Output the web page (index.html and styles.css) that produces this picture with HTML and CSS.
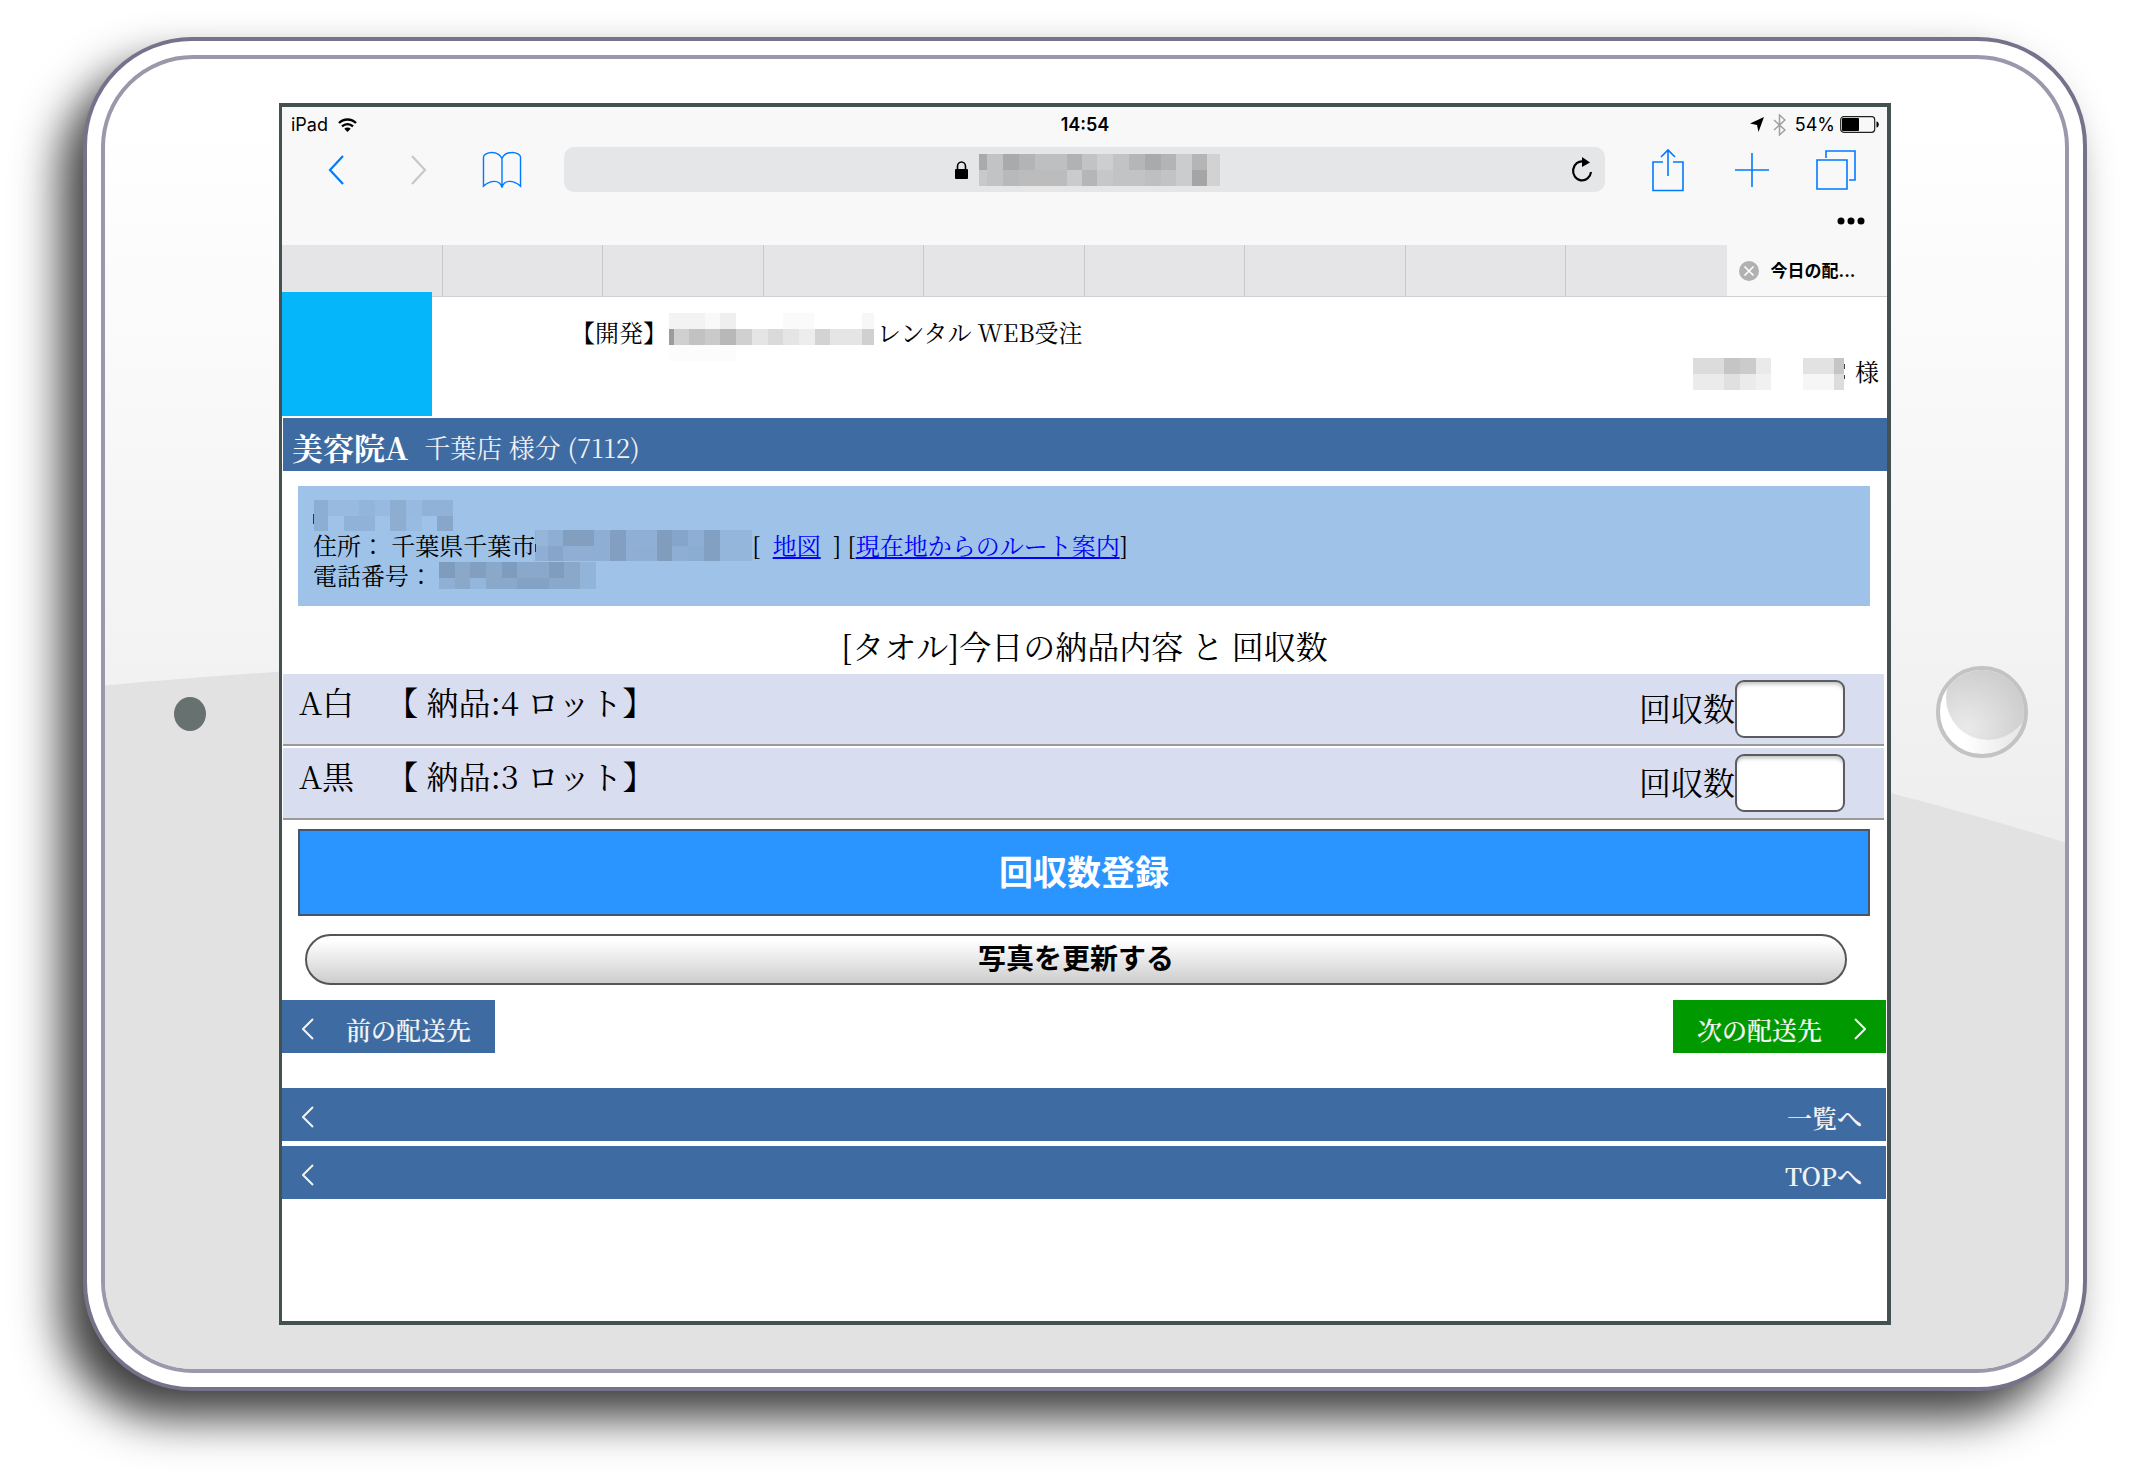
FILE: index.html
```html
<!DOCTYPE html>
<html lang="ja">
<head>
<meta charset="utf-8">
<title>今日の配送</title>
<link rel="stylesheet" href="styles.css">
</head>
<body>
<div class="device">
  <div class="bezel">
    <svg class="bezel-shade" viewBox="0 0 1960 1309" preserveAspectRatio="none" aria-hidden="true"><path d="M0 626C600 570 1350 590 1960 783V1309H0Z" fill="#e2e2e2"/></svg>
    <div class="side"><span class="camera"></span></div>
    <div class="screen">
      <div class="status">
        <div class="status-left">
          <span>iPad</span>
          <svg width="19" height="14" viewBox="0 0 19 14" aria-hidden="true"><g fill="none" stroke="#000" stroke-width="2.400"><path d="M1 5a12 12 0 0 1 17 0"/><path d="M4 8.300a8 8 0 0 1 11 0"/></g><path d="M6.300 10.800a4.600 4.600 0 0 1 6.400 0L9.500 14Z"/></svg>
        </div>
        <strong class="clock">14:54</strong>
        <div class="status-right">
          <svg width="14" height="15" viewBox="0 0 14 15" aria-hidden="true"><path d="M14 0L8.500 15 7 8 0 6.500Z"/></svg>
          <svg width="13" height="22" viewBox="0 0 13 22" aria-hidden="true"><path d="M1 6l11 10-5.500 5V1L12 6 1 16" fill="none" stroke="#a0a0a0" stroke-width="1.500"/></svg>
          <span>54%</span>
          <svg class="battery" width="39" height="17" viewBox="0 0 39 17" aria-hidden="true"><rect x=".7" y=".7" width="34" height="15.600" rx="3" fill="none" stroke="#222" stroke-width="1.200"/><rect x="2" y="2" width="17" height="13" rx="1"/><path d="M36.500 5.500c3 0 3 6 0 6Z"/></svg>
        </div>
      </div>
      <div class="toolbar">
        <div class="nav">
          <button class="tool" type="button" aria-label="戻る"><svg width="16" height="30" viewBox="0 0 16 30"><path d="M15 1L2 15 15 29" fill="none" stroke="#007aff" stroke-width="2.200"/></svg></button>
          <button class="tool" type="button" aria-label="進む"><svg width="16" height="30" viewBox="0 0 16 30"><path d="M1 1L14 15 1 29" fill="none" stroke="#c7c7c7" stroke-width="2.200"/></svg></button>
          <button class="tool" type="button" aria-label="ブックマーク"><svg width="40" height="38" viewBox="0 0 42 40"><path d="M21 8C19 3 14 1.500 10 1.500 6 1.500 1.500 4 1.500 6.500V37C6 33 9 32 13 32 17 32 20 34 21 38.500 22 34 25 32 29 32 33 32 36 33 40.500 37V6.500C40.500 4 36 1.500 32 1.500 28 1.500 23 3 21 8ZV38" fill="none" stroke="#007aff" stroke-width="1.500"/></svg></button>
        </div>
        <div class="address">
          <span></span>
          <div class="address-text">
            <svg width="13" height="18" viewBox="0 0 13 18" aria-hidden="true"><path d="M2.500 9V5.500a4 4.500 0 0 1 8 0V9" fill="none" stroke="#000" stroke-width="1.600"/><rect y="8" width="13" height="10" rx="1"/></svg>
            <svg width="241" height="32" viewBox="0 0 241 32" aria-hidden="true" shape-rendering="crispEdges"><rect width="241" height="32" fill="#c2c3c4"/><rect width="8" height="16" fill="#aaaaaa"/><rect x="24" width="16" height="16" fill="#a9aaac"/><rect x="40" width="16" height="16" fill="#b3b4b6"/><rect x="56" width="32" height="16" fill="#bebfc1"/><rect x="88" width="15" height="16" fill="#b1b2b4"/><rect x="118" width="16" height="16" fill="#cdced0"/><rect x="150" width="16" height="16" fill="#b5b6b8"/><rect x="166" width="16" height="16" fill="#a9aaac"/><rect x="182" width="16" height="16" fill="#b3b4b6"/><rect x="197" width="16" height="32" fill="#cbccce"/><rect x="213" width="15" height="16" fill="#b4b5b7"/><rect x="228" width="13" height="32" fill="#d2d2d3"/><rect y="16" width="8" height="16" fill="#c8c9cb"/><rect x="24" y="16" width="16" height="16" fill="#b8b9bb"/><rect x="40" y="16" width="48" height="16" fill="#bcbcbd"/><rect x="88" y="16" width="15" height="16" fill="#cacbcd"/><rect x="103" y="16" width="15" height="16" fill="#b6b6b6"/><rect x="118" y="16" width="16" height="16" fill="#c6c7c9"/><rect x="166" y="16" width="16" height="16" fill="#c0bfbf"/><rect x="213" y="16" width="15" height="16" fill="#a4a5a4"/></svg>
          </div>
          <button class="reload" type="button" aria-label="再読み込み"><svg width="22" height="25" viewBox="0 0 22 25"><path d="M12.500 4.500A9 9.500 0 1 0 20 15" fill="none" stroke="#000" stroke-width="2.200"/><path d="M11 0L19 5.500 11 10Z"/></svg></button>
        </div>
        <div class="actions">
          <button class="tool tool-wide" type="button" aria-label="共有"><svg width="32" height="44" viewBox="0 0 32 44"><path d="M11 14H1V42.500H31V14H21M16 28V2M9 9L16 2 23 9" fill="none" stroke="#007aff" stroke-width="1.600"/></svg></button>
          <button class="tool tool-wide" type="button" aria-label="新規タブ"><svg width="34" height="34" viewBox="0 0 34 34"><path d="M17 0V34M0 17H34" fill="none" stroke="#007aff" stroke-width="1.600"/></svg></button>
          <button class="tool tool-wide" type="button" aria-label="タブ一覧"><svg width="40" height="40" viewBox="0 0 40 40"><path d="M1 10H31V39H1ZM10 8V1H39V30H33" fill="none" stroke="#007aff" stroke-width="1.600"/></svg></button>
        </div>
      </div>
      <div class="more">
        <button class="more-button" type="button" aria-label="その他"><svg width="28" height="8" viewBox="0 0 28 8"><circle cx="4" cy="4" r="3.500"/><circle cx="14" cy="4" r="3.500"/><circle cx="24" cy="4" r="3.500"/></svg></button>
      </div>
      <div class="tabs">
        <span class="tab"></span><span class="tab"></span><span class="tab"></span><span class="tab"></span><span class="tab"></span><span class="tab"></span><span class="tab"></span><span class="tab"></span><span class="tab tab-last"></span>
        <div class="tab-active">
          <button class="tab-close" type="button" aria-label="タブを閉じる"><svg width="20" height="20" viewBox="0 0 20 20"><circle cx="10" cy="10" r="10" fill="#b1b1b1"/><path d="M5.500 5.500L14.500 14.500M14.500 5.500L5.500 14.500" stroke="#fff" stroke-width="1.600"/></svg></button>
          <span>今日の配...</span>
        </div>
      </div>

      <main class="page">
        <header class="header">
          <div class="logo"></div>
          <p class="site">【開発】<svg class="site-mask" width="206" height="48" viewBox="0 0 206 48" aria-hidden="true" shape-rendering="crispEdges"><rect width="67" height="16" fill="#f3f3f3"/><rect x="36" width="15" height="16" fill="#f9f9f9"/><rect x="51" width="16" height="16" fill="#efefef"/><rect x="114" width="31" height="16" fill="#fafafa"/><rect x="193" width="12" height="16" fill="#f7f7f7"/><rect y="32" width="67" height="16" fill="#fcfcfc"/><rect y="16" width="205" height="16" fill="#e5e5e5"/><rect y="16" width="5" height="16" fill="#9c9c9c"/><rect x="5" y="16" width="15" height="16" fill="#d0d0d0"/><rect x="20" y="16" width="16" height="16" fill="#c2c2c2"/><rect x="36" y="16" width="15" height="16" fill="#cacaca"/><rect x="51" y="16" width="16" height="16" fill="#b8b8b8"/><rect x="67" y="16" width="16" height="16" fill="#d0d0d0"/><rect x="99" y="16" width="15" height="16" fill="#dadada"/><rect x="130" y="16" width="16" height="16" fill="#ededed"/><rect x="146" y="16" width="15" height="16" fill="#d3d3d3"/><rect x="193" y="16" width="12" height="16" fill="#d0d0d0"/></svg>レンタル WEB受注</p>
          <p class="user"><svg width="154" height="32" viewBox="0 0 154 32" aria-hidden="true" shape-rendering="crispEdges"><rect width="78" height="16" fill="#dcdcdc"/><rect x="31" width="16" height="16" fill="#c5c5c5"/><rect x="47" width="16" height="16" fill="#cbcbcb"/><rect x="63" width="15" height="16" fill="#eaeaea"/><rect y="16" width="78" height="16" fill="#ebebeb"/><rect x="31" y="16" width="16" height="16" fill="#e0e0e0"/><rect x="63" y="16" width="15" height="16" fill="#f1f1f1"/><rect x="110" width="31" height="16" fill="#e2e2e2"/><rect x="141" width="10" height="16" fill="#c5c5c5"/><rect x="110" y="16" width="31" height="16" fill="#f6f6f6"/><rect x="141" y="16" width="10" height="16" fill="#dcdcdc"/><path d="M151 6h1v5h-1ZM151 17h1v4h-1Z" fill="#444"/></svg><span>様</span></p>
        </header>

        <h1 class="shop"><strong class="shop-name">美容院A</strong><span>千葉店 様分 (7112)</span></h1>

        <section class="info">
          <p class="line"><svg width="141" height="31" viewBox="0 0 141 31" aria-hidden="true" shape-rendering="crispEdges"><path d="M0 14h1v10H0Z" fill="#334"/><rect x="1" width="139" height="16" fill="#98bae0"/><rect x="1" width="14" height="31" fill="#8caed3"/><rect x="46" width="16" height="16" fill="#92b5db"/><rect x="77" width="16" height="31" fill="#8dadd1"/><rect x="109" width="31" height="16" fill="#91b2d8"/><rect x="31" y="16" width="31" height="15" fill="#91b2d8"/><rect x="93" y="16" width="16" height="15" fill="#98bbe1"/><rect x="124" y="16" width="16" height="15" fill="#87a6ca"/></svg></p>
          <p class="line">住所： 千葉県千葉市<svg width="217" height="31" viewBox="0 0 217 31" aria-hidden="true" shape-rendering="crispEdges"><rect width="217" height="31" fill="#8eafd3"/><path d="M0 14h1v8H0Z" fill="#234"/><rect x="1" width="12" height="16" fill="#95b5d9"/><rect x="28" width="31" height="16" fill="#829fbf"/><rect x="75" width="16" height="31" fill="#829fc1"/><rect x="91" width="31" height="16" fill="#8fb0d4"/><rect x="122" width="15" height="31" fill="#809dbd"/><rect x="137" width="16" height="16" fill="#86a6c9"/><rect x="169" width="16" height="31" fill="#82a0c2"/><rect x="185" width="32" height="31" fill="#95b6db"/><rect x="13" y="16" width="15" height="15" fill="#86a5c8"/><rect x="153" y="16" width="16" height="15" fill="#8badd1"/></svg>[&nbsp; <a href="#map">地図</a> &nbsp;] [<a href="#route">現在地からのルート案内</a>]</p>
          <p class="line">電話番号： <svg width="157" height="27" viewBox="0 0 157 27" aria-hidden="true" shape-rendering="crispEdges"><rect width="157" height="27" fill="#89a8ca"/><rect width="16" height="16" fill="#7f9cbc"/><rect x="31" width="16" height="16" fill="#829fc0"/><rect x="63" width="15" height="16" fill="#7e9cbd"/><rect x="110" width="15" height="16" fill="#7f9dbe"/><rect x="141" width="16" height="27" fill="#93b4d9"/><rect y="16" width="16" height="11" fill="#8fb0d4"/><rect x="31" y="16" width="16" height="11" fill="#94b6dc"/><rect x="78" y="16" width="32" height="11" fill="#83a2c4"/></svg></p>
        </section>

        <form class="collect">
          <h2 class="title">[タオル]今日の納品内容 と 回収数</h2>
          <div class="item">
            <span class="item-name">A白  　【 納品:4 ロット】</span>
            <div class="item-count"><label class="item-label" for="white">回収数</label><input class="count" id="white" type="text"></div>
          </div>
          <div class="item">
            <span class="item-name">A黒  　【 納品:3 ロット】</span>
            <div class="item-count"><label class="item-label" for="black">回収数</label><input class="count" id="black" type="text"></div>
          </div>
          <button class="register" type="button">回収数登録</button>
          <button class="photo" type="button">写真を更新する</button>
        </form>

        <nav class="steps">
          <a class="step" href="#prev"><svg width="12" height="22" viewBox="0 0 12 22" aria-hidden="true"><path d="M11 1L1 11 11 21"/></svg><span>前の配送先</span></a>
          <a class="step step-next" href="#next"><span>次の配送先</span><svg width="12" height="22" viewBox="0 0 12 22" aria-hidden="true"><path d="M1 1L11 11 1 21"/></svg></a>
        </nav>
        <nav class="links">
          <a class="link" href="#list"><svg width="12" height="22" viewBox="0 0 12 22" aria-hidden="true"><path d="M11 1L1 11 11 21"/></svg><span>一覧へ</span></a>
          <a class="link" href="#top"><svg width="12" height="22" viewBox="0 0 12 22" aria-hidden="true"><path d="M11 1L1 11 11 21"/></svg><span>TOPへ</span></a>
        </nav>
      </main>
    </div>
    <div class="side side-right">
      <svg width="92" height="92" viewBox="0 0 92 92" aria-hidden="true">
        <defs>
          <linearGradient id="rim" x1="0" y1="0" x2="1" y2="0"><stop offset=".3" stop-color="#fff"/><stop offset="1" stop-color="#e4e4e4"/></linearGradient>
          <radialGradient id="dome" cx=".25" cy=".85" r=".85"><stop offset="0" stop-color="#eaeaea"/><stop offset="1" stop-color="#c9c9c9"/></radialGradient>
          <clipPath id="disc"><circle cx="46" cy="46" r="42"/></clipPath>
        </defs>
        <circle cx="46" cy="46" r="44" fill="url(#rim)" stroke="#c3c3c3" stroke-width="4"/>
        <ellipse cx="52" cy="32" rx="42" ry="42" fill="url(#dome)" clip-path="url(#disc)"/>
      </svg>
    </div>
  </div>
</div>
</body>
</html>
```
FILE: styles.css
```css
* { box-sizing: border-box; }
body {
  margin: 0;
  min-height: 100vh;
  padding: 37px 42px 90px 83px;
  display: flex;
  background: #fff;
  color: #000;
  font-family: "Noto Serif CJK JP", "Liberation Serif", "Noto Sans CJK JP", serif;
}
p, h1, h2 { margin: 0; font-weight: 400; }
button { margin: 0; padding: 0; border: 0; background: none; color: inherit; }
svg { display: block; flex: none; }

/* Tablet body */
.device {
  flex: 1;
  display: flex;
  padding: 14px;
  border: 4px solid #75738b;
  border-radius: 109px;
  background: #fff;
  box-shadow: -22px 27px 46px rgba(0, 0, 0, .76);
}
.bezel {
  flex: 1;
  position: relative;
  display: flex;
  padding: 44px 0;
  border: 4px solid #9a98aa;
  border-radius: 92px;
  background: linear-gradient(#fff 5%, #eee 60%);
  overflow: hidden;
}
.bezel-shade { position: absolute; inset: 0; width: 100%; height: 100%; }
.side {
  position: relative;
  flex: 0 0 174px;
  display: flex;
  align-items: center;
  justify-content: center;
  padding: 0 4px 0 0;
}
.side-right { padding: 0 0 4px 8px; }
.camera { width: 32px; height: 34px; border-radius: 50%; background: #667170; }
.screen {
  position: relative;
  flex: 1;
  min-width: 0;
  display: flex;
  flex-direction: column;
  border: solid #435251;
  border-width: 4px 4px 4px 3px;
  background: #f8f8f8;
  font-size: 24px;
  line-height: 30px;
}

/* Browser chrome */
.status {
  display: grid;
  grid-template-columns: 1fr auto 1fr;
  align-items: center;
  height: 33px;
  padding: 2px 8px 0 9px;
  font: 18px Inter, sans-serif;
}
.status-left, .status-right { display: flex; align-items: center; gap: 10px; }
.status-right { justify-content: flex-end; gap: 9px; }
.battery { margin-left: -4px; }
.clock { font-weight: 600; }
.toolbar {
  display: flex;
  align-items: center;
  height: 59px;
  padding: 0 9px 0 12px;
}
.nav, .actions { display: flex; }
.tool { width: 83px; height: 48px; display: flex; align-items: center; justify-content: center; }
.tool-wide { width: 84px; }
.address {
  flex: 1;
  display: grid;
  grid-template-columns: 1fr auto 1fr;
  align-items: center;
  height: 45px;
  margin: 0 21px;
  padding: 0 12px;
  border-radius: 10px;
  background: #e5e6e8;
}
.address-text { display: flex; align-items: center; gap: 11px; padding-left: 6px; }
.reload { justify-self: end; }
.more { display: flex; justify-content: flex-end; height: 46px; padding: 0 22px; }
.more-button { height: 44px; }
.tabs {
  display: grid;
  grid-template-columns: repeat(10, 1fr);
  height: 52px;
  border-bottom: 1px solid #cfcfd1;
}
.tab { border-right: 1px solid #c9c9cb; background: #e5e5e7; }
.tab-last { border-right: 0; }
.tab-active {
  display: flex;
  align-items: center;
  gap: 12px;
  padding-left: 12px;
  font: 700 17px/24px Inter, "Noto Sans CJK JP", sans-serif;
  white-space: nowrap;
}
.tab-close { display: flex; }

/* Web page */
.page { flex: 1; background: #fff; }
.header {
  display: grid;
  grid-template-columns: 150px 1fr auto;
  height: 121px;
  padding-right: 8px;
}
.logo { height: 124px; margin-top: -5px; position: relative; background: #05b7fa; }
.site { display: flex; align-items: center; height: 70px; padding-left: 139px; }
.site-mask { margin: 10px 2px 0 2px; }
.user { display: flex; gap: 8px; height: 32px; margin-top: 61px; line-height: 26px; }
.shop {
  display: flex;
  align-items: center;
  gap: 16px;
  height: 53px;
  margin-left: 1px;
  padding: 4px 9px 0;
  background: #3e6ba2;
  color: #eef0f4;
  font-size: 26px;
}
.shop-name { color: #fff; font-size: 31px; }
.info {
  margin: 15px 17px 0 16px;
  padding: 14px 15px 16px;
  background: #9fc2e8;
}
.line { display: flex; align-items: center; height: 30px; white-space: pre; }
.info a { color: #00f; }
.title { height: 68px; padding-top: 12px; font-size: 32px; line-height: 54px; text-align: center; }
.item {
  display: flex;
  justify-content: space-between;
  height: 72px;
  margin: 0 3px 2px 1px;
  padding: 6px 39px 0 16px;
  border-bottom: 2px solid #999;
  background: #d8ddf0;
  font-size: 32px;
}
.item-name { line-height: 42px; white-space: pre; }
.item-count { display: flex; height: 58px; }
.item-label { line-height: 54px; }
.count {
  width: 110px;
  height: 58px;
  padding: 0 8px;
  border: 2px solid #5c5c60;
  border-radius: 9px;
  background: #fff;
  box-shadow: inset 0 4px 4px -2px #bbb;
  font: inherit;
}
.register, .photo { display: block; font-family: "Noto Sans CJK JP", sans-serif; font-weight: 700; }
.register {
  width: calc(100% - 33px);
  height: 87px;
  margin: 9px 17px 0 16px;
  padding-bottom: 4px;
  border: 2px solid #47566a;
  background: #2a94ff;
  color: #fff;
  font-size: 34px;
}
.photo {
  width: calc(100% - 63px);
  height: 51px;
  margin: 18px 40px 0 23px;
  padding-bottom: 6px;
  border: 2px solid #555;
  border-radius: 26px;
  background: linear-gradient(#fff 10%, #cdcdcd);
  font-size: 28px;
}
.steps { display: flex; justify-content: space-between; margin: 15px 1px 35px 0; }
.step, .link {
  display: flex;
  align-items: center;
  justify-content: space-between;
  height: 53px;
  padding: 5px 24px 0 20px;
  background: #3e6ba2;
  color: #f2f2f2;
  font-size: 25px;
  font-weight: 600;
  text-decoration: none;
}
.step { width: 213px; }
.step-next { padding: 5px 20px 0 24px; background: #090; }
.step path, .link path { fill: none; stroke: #f2f2f2; stroke-width: 2; }
.links { display: grid; gap: 5px; margin-right: 1px; }
```
